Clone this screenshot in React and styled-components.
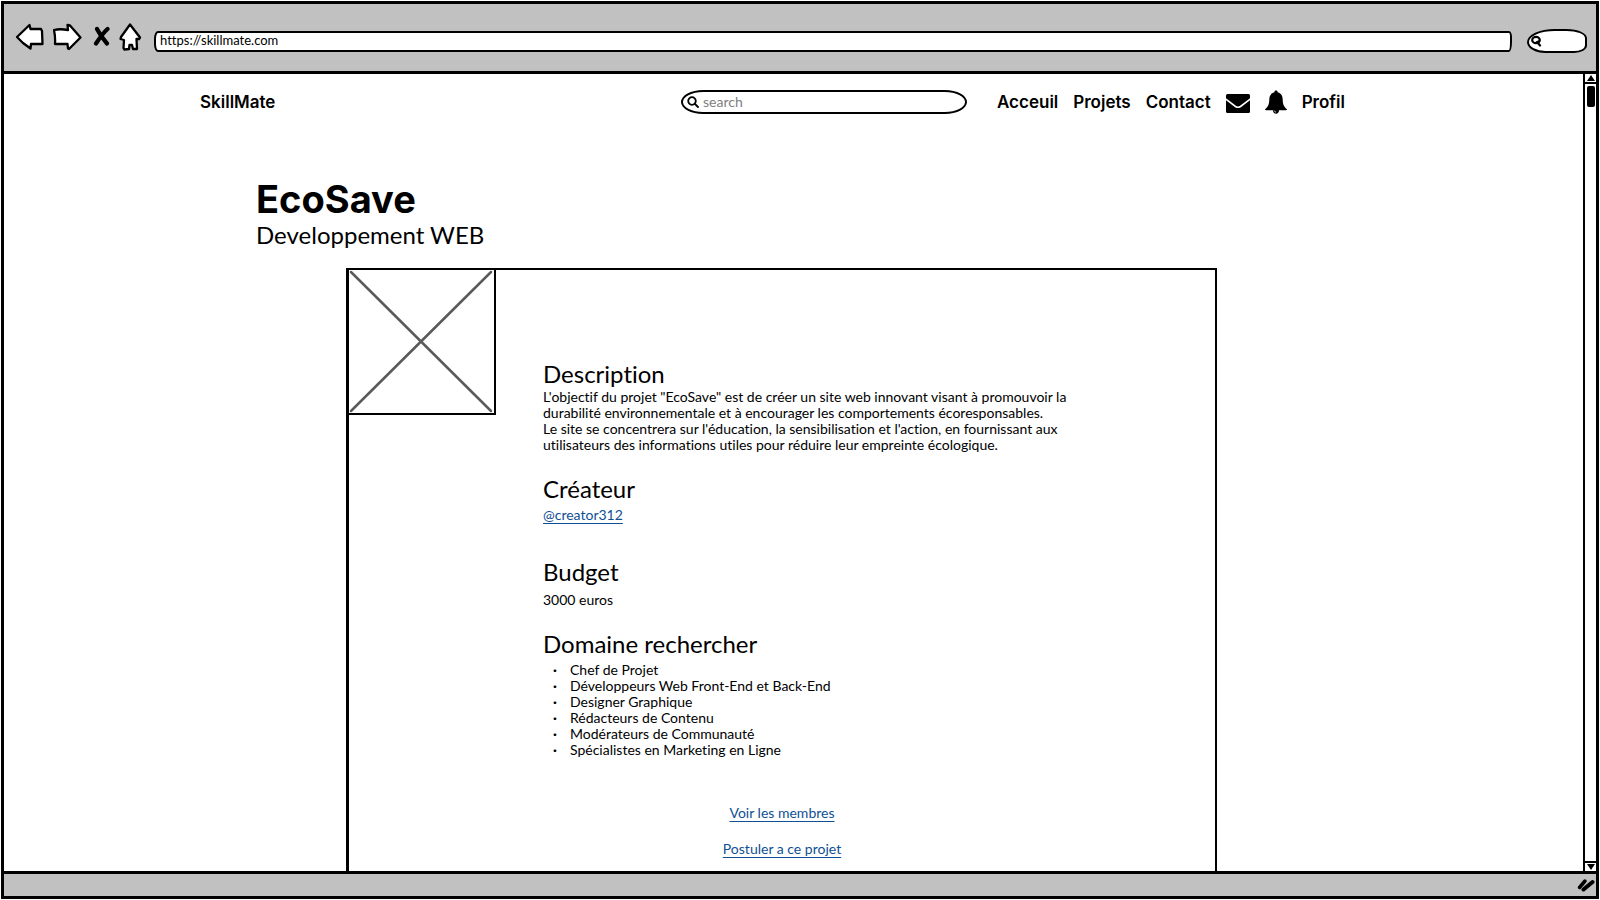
import React from "react";
import styled, { createGlobalStyle } from "styled-components";

const INK = "#000";
const CHROME = "#c1c1c1";
const LINK = "#0f4f94";

const GlobalStyle = createGlobalStyle`
  * { box-sizing: border-box; }
  body {
    margin: 0;
    background: #fff;
    color: ${INK};
    font-family: Lato, "Open Sans", sans-serif;
    font-size: 14px;
    line-height: 16px;
    font-variant-ligatures: none;
  }
  h1, h2, p, ul { margin: 0; padding: 0; }
  input, button { font: inherit; color: inherit; font-variant-ligatures: none; }
`;

const Browser = styled.div`
  min-height: 100vh;
  padding: 1px;
  background: #fff;
  display: flex;
`;

const Frame = styled.div`
  flex: 1;
  min-width: 0;
  display: flex;
  flex-direction: column;
  border: 3px solid ${INK};
  background: ${CHROME};
`;

const Toolbar = styled.div`
  display: flex;
  align-items: center;
  height: 70px;
  padding: 0 9px 2px 11px;
  border-bottom: 3px solid ${INK};
`;

const ToolButtons = styled.div`
  display: flex;
  align-items: center;
  gap: 9px;
  margin-right: 11px;
`;

const IconButton = styled.button`
  display: flex;
  padding: 0;
  border: 0;
  background: none;
  cursor: pointer;
  svg { display: block; }
`;

const Fields = styled.div`
  flex: 1;
  display: flex;
  align-items: center;
  gap: 15px;
  padding-top: 9px;
`;

const AddressInput = styled.input`
  flex: 1;
  min-width: 0;
  height: 21px;
  padding: 0 4px 2px;
  border: 2px solid ${INK};
  border-radius: 4px 3px 3px 4px / 8px 6px 10px 8px;
  background: #fff;
  font-size: 13px;
  outline: none;
`;

const QuickSearch = styled.label`
  display: flex;
  align-items: center;
  width: 60px;
  height: 24px;
  padding-left: 2px;
  border: 2px solid ${INK};
  border-radius: 30px 22px 14px 20px / 14px 10px 8px 12px;
  background: #fff;
`;

const BareInput = styled.input`
  flex: 1;
  min-width: 0;
  padding: 0;
  border: 0;
  background: none;
  outline: none;
  &::placeholder { color: #808080; opacity: 1; }
`;

const Viewport = styled.div`
  flex: 1;
  display: flex;
  background: #fff;
`;

const Page = styled.div`
  flex: 1;
  min-width: 0;
  display: flex;
  flex-direction: column;
`;

const Scrollbar = styled.div`
  display: flex;
  flex-direction: column;
  width: 13px;
  border-left: 2px solid ${INK};
`;

const ScrollButton = styled(IconButton)`
  justify-content: center;
  align-items: center;
  height: 8px;
`;

const ScrollTrack = styled.div`
  flex: 1;
  padding: 2px;
  border: solid ${INK};
  border-width: 2px 0;
`;

const ScrollThumb = styled.div`
  width: 8px;
  height: 21px;
  border-radius: 2px;
  background: ${INK};
`;

const Header = styled.header`
  display: flex;
  align-items: center;
  padding: 16px 238px 0 196px;
  font-family: Inter, sans-serif;
  font-size: 17px;
  line-height: 24px;
  font-weight: 600;
`;

const Brand = styled.a`
  margin-right: auto;
  color: inherit;
  text-decoration: none;
`;

const SearchBox = styled.label`
  display: flex;
  align-items: center;
  gap: 4px;
  width: 286px;
  height: 24px;
  margin-right: 30px;
  padding: 0 12px 0 4px;
  border: 2px solid ${INK};
  border-radius: 22px / 12px;
  font-family: Lato, sans-serif;
  font-size: 14px;
  font-weight: 400;
`;

const Nav = styled.nav`
  display: flex;
  align-items: center;
  justify-content: space-between;
  min-width: 348px;
`;

const NavLink = styled.a`
  display: flex;
  color: inherit;
  text-decoration: none;
`;

const TitleBlock = styled.div`
  padding: 63px 238px 19px 252px;
`;

const Title = styled.h1`
  font-family: Inter, sans-serif;
  font-size: 38px;
  line-height: 44px;
  font-weight: 700;
`;

const Subtitle = styled.p`
  font-size: 24px;
  line-height: 28px;
`;

const Card = styled.main`
  flex: 1;
  display: flex;
  flex-direction: column;
  margin: 0 366px 0 342px;
  border: solid ${INK};
  border-width: 2px 2px 0 3px;
`;

const CardTop = styled.div`
  display: flex;
  height: 90px;
`;

const Placeholder = styled.svg`
  flex: none;
  display: block;
  width: 147px;
  height: 145px;
  border: solid ${INK};
  border-width: 0 2px 2px 0;
`;

const Details = styled.div`
  display: flex;
  flex-direction: column;
  padding: 0 100px 0 194px;
`;

const Section = styled.section`
  display: flex;
  flex-direction: column;
  align-items: flex-start;
  gap: ${(p) => p.$gap}px;
  margin-bottom: ${(p) => p.$after || 0}px;
`;

const SectionTitle = styled.h2`
  font-size: 24px;
  line-height: 28px;
  font-weight: 400;
`;

const TextLink = styled.a`
  color: ${LINK};
  text-decoration: underline;
  text-underline-offset: 3px;
`;

const List = styled.ul`
  list-style: none;
`;

const ListItem = styled.li`
  display: flex;
  &::before {
    content: "·";
    width: 17px;
    margin-left: 10px;
    font-weight: 700;
  }
`;

const Actions = styled.div`
  display: flex;
  flex-direction: column;
  align-items: center;
  gap: 20px;
  padding: 47px 0 8px;
`;

const StatusBar = styled.div`
  display: flex;
  justify-content: flex-end;
  align-items: center;
  height: 25px;
  padding-right: 1px;
  border-top: 3px solid ${INK};
`;

const outline = {
  fill: "#fff",
  stroke: INK,
  strokeWidth: 2.3,
  strokeLinejoin: "round",
};

const BackIcon = () => (
  <svg width="29" height="28" viewBox="0 0 29 28">
    <path {...outline} d="M2 14 L14.500 2 L15.500 6 L26 6 L27 8 L27.500 21 L16 21 L15.500 25.500 L8 20 Z" />
  </svg>
);

const ForwardIcon = () => (
  <svg width="30" height="28" viewBox="0 0 30 28">
    <path {...outline} d="M1 7 Q7 5.500 15 7 L14.500 2 L17 2.500 L27.500 14.500 L16 26 L15 25.500 L14.500 21 L2 21 Q2.500 14 1 7 Z" />
  </svg>
);

const StopIcon = () => (
  <svg width="18" height="24" viewBox="0 0 18 24">
    <path
      d="M5 4 Q8.500 11 15 18.500 M15.500 4 Q11 8 4 18.500"
      fill="none"
      stroke={INK}
      strokeWidth="4.200"
      strokeLinecap="round"
    />
  </svg>
);

const HomeIcon = () => (
  <svg width="24" height="28" viewBox="0 0 24 28">
    <path
      {...outline}
      d="M11 1.500 L21 14.500 L20 16 L17.500 16 L18 26 L14 26 L13 22 L10.500 22 L10 26 L5.500 26.500 L4.500 25 L5 17 L1.500 16 L2 14 Z"
    />
  </svg>
);

const MagnifierIcon = ({ size, weight }) => (
  <svg width={size} height={size} viewBox="0 0 12 12" fill="none" stroke={INK} strokeWidth={weight}>
    <circle cx="5" cy="5" r="3.800" />
    <path d="M8 8 L11 11" strokeLinecap="round" />
  </svg>
);

const QuickMagnifierIcon = () => (
  <svg width="12" height="12" viewBox="0 0 12 12" fill="none" stroke={INK} strokeWidth="2.200">
    <ellipse cx="5" cy="5" rx="3.800" ry="3.200" />
    <path d="M5.500 7.500 L7.500 6.500 M7 8 L9 10.500" strokeLinecap="round" />
  </svg>
);

const MailIcon = () => (
  <svg width="24" height="24" viewBox="0 0 24 24">
    <rect y="4" width="24" height="19" rx="1.500" fill={INK} />
    <path
      d="M-1 8.500 L9.500 16.500 Q12 18 14.500 16.500 L25 8.500"
      fill="none"
      stroke="#fff"
      strokeWidth="1.600"
    />
  </svg>
);

const BellIcon = () => (
  <svg width="22" height="24" viewBox="0 0 22 24">
    <path
      fill={INK}
      d="M11 0.500 C12.200 0.500 12.700 1.300 12.500 2.300 C16 3 17.700 6 17.700 9.500 C17.700 14.500 19.200 17 22 19.300 C22 20 21.500 20.200 20.800 20.200 H14 C14 22.200 12.800 23.700 11 23.700 C9.200 23.700 8 22.200 8 20.200 H1.200 C0.500 20.200 0 20 0 19.300 C2.800 17 4.300 14.500 4.300 9.500 C4.300 6 6 3 9.500 2.300 C9.300 1.300 9.800 0.500 11 0.500 Z"
    />
    <path d="M9.300 20.500 Q9.500 22 11 22.200" fill="none" stroke="#fff" strokeWidth="0.700" />
  </svg>
);

const Triangle = ({ down }) => (
  <svg width="8" height="6" viewBox="0 0 8 6">
    <path fill={INK} d={down ? "M0 0 H8 L4 6 Z" : "M0 6 H8 L4 0 Z"} />
  </svg>
);

const GripIcon = () => (
  <svg width="18" height="14" viewBox="0 0 18 14" stroke={INK} strokeLinecap="round">
    <path d="M2.500 9.500 L8 3" strokeWidth="3.500" />
    <path d="M6.500 11.500 L15.500 4" strokeWidth="4" />
  </svg>
);

const domains = [
  "Chef de Projet",
  "Développeurs Web Front-End et Back-End",
  "Designer Graphique",
  "Rédacteurs de Contenu",
  "Modérateurs de Communauté",
  "Spécialistes en Marketing en Ligne",
];

export default function App() {
  return (
    <Browser>
      <GlobalStyle />
      <Frame>
        <Toolbar>
          <ToolButtons>
            <IconButton aria-label="Précédent"><BackIcon /></IconButton>
            <IconButton aria-label="Suivant"><ForwardIcon /></IconButton>
            <IconButton aria-label="Arrêter"><StopIcon /></IconButton>
            <IconButton aria-label="Accueil"><HomeIcon /></IconButton>
          </ToolButtons>
          <Fields>
            <AddressInput aria-label="Adresse" defaultValue="https://skillmate.com" />
            <QuickSearch>
              <QuickMagnifierIcon />
              <BareInput aria-label="Recherche rapide" />
            </QuickSearch>
          </Fields>
        </Toolbar>

        <Viewport>
          <Page>
            <Header>
              <Brand href="#">SkillMate</Brand>
              <SearchBox>
                <MagnifierIcon size={12} weight={1.8} />
                <BareInput aria-label="Rechercher" placeholder="search" />
              </SearchBox>
              <Nav>
                <NavLink href="#accueil">Acceuil</NavLink>
                <NavLink href="#projets">Projets</NavLink>
                <NavLink href="#contact">Contact</NavLink>
                <NavLink href="#messages" aria-label="Messages"><MailIcon /></NavLink>
                <NavLink href="#notifications" aria-label="Notifications"><BellIcon /></NavLink>
                <NavLink href="#profil">Profil</NavLink>
              </Nav>
            </Header>

            <TitleBlock>
              <Title>EcoSave</Title>
              <Subtitle>Developpement WEB</Subtitle>
            </TitleBlock>

            <Card>
              <CardTop>
                <Placeholder viewBox="0 0 145 143" preserveAspectRatio="none" aria-hidden="true">
                  <path d="M2 2 L142 141 M142 2 L2 141" stroke="#5a5a5a" strokeWidth="2.500" strokeLinecap="round" />
                </Placeholder>
              </CardTop>
              <Details>
                <Section $gap={1} $after={22}>
                  <SectionTitle>Description</SectionTitle>
                  <p>
                    L'objectif du projet "EcoSave" est de créer un site web innovant visant à promouvoir la
                    <br />
                    durabilité environnementale et à encourager les comportements écoresponsables.
                    <br />
                    Le site se concentrera sur l'éducation, la sensibilisation et l'action, en fournissant aux
                    <br />
                    utilisateurs des informations utiles pour réduire leur empreinte écologique.
                  </p>
                </Section>
                <Section $gap={4} $after={35}>
                  <SectionTitle>Créateur</SectionTitle>
                  <TextLink href="#creator312">@creator312</TextLink>
                </Section>
                <Section $gap={6} $after={22}>
                  <SectionTitle>Budget</SectionTitle>
                  <p>3000 euros</p>
                </Section>
                <Section $gap={4}>
                  <SectionTitle>Domaine rechercher</SectionTitle>
                  <List>
                    {domains.map((name) => (
                      <ListItem key={name}>{name}</ListItem>
                    ))}
                  </List>
                </Section>
              </Details>
              <Actions>
                <TextLink href="#membres">Voir les membres</TextLink>
                <TextLink href="#postuler">Postuler a ce projet</TextLink>
              </Actions>
            </Card>
          </Page>

          <Scrollbar>
            <ScrollButton aria-label="Défiler vers le haut"><Triangle /></ScrollButton>
            <ScrollTrack>
              <ScrollThumb />
            </ScrollTrack>
            <ScrollButton aria-label="Défiler vers le bas"><Triangle down /></ScrollButton>
          </Scrollbar>
        </Viewport>

        <StatusBar>
          <GripIcon />
        </StatusBar>
      </Frame>
    </Browser>
  );
}
